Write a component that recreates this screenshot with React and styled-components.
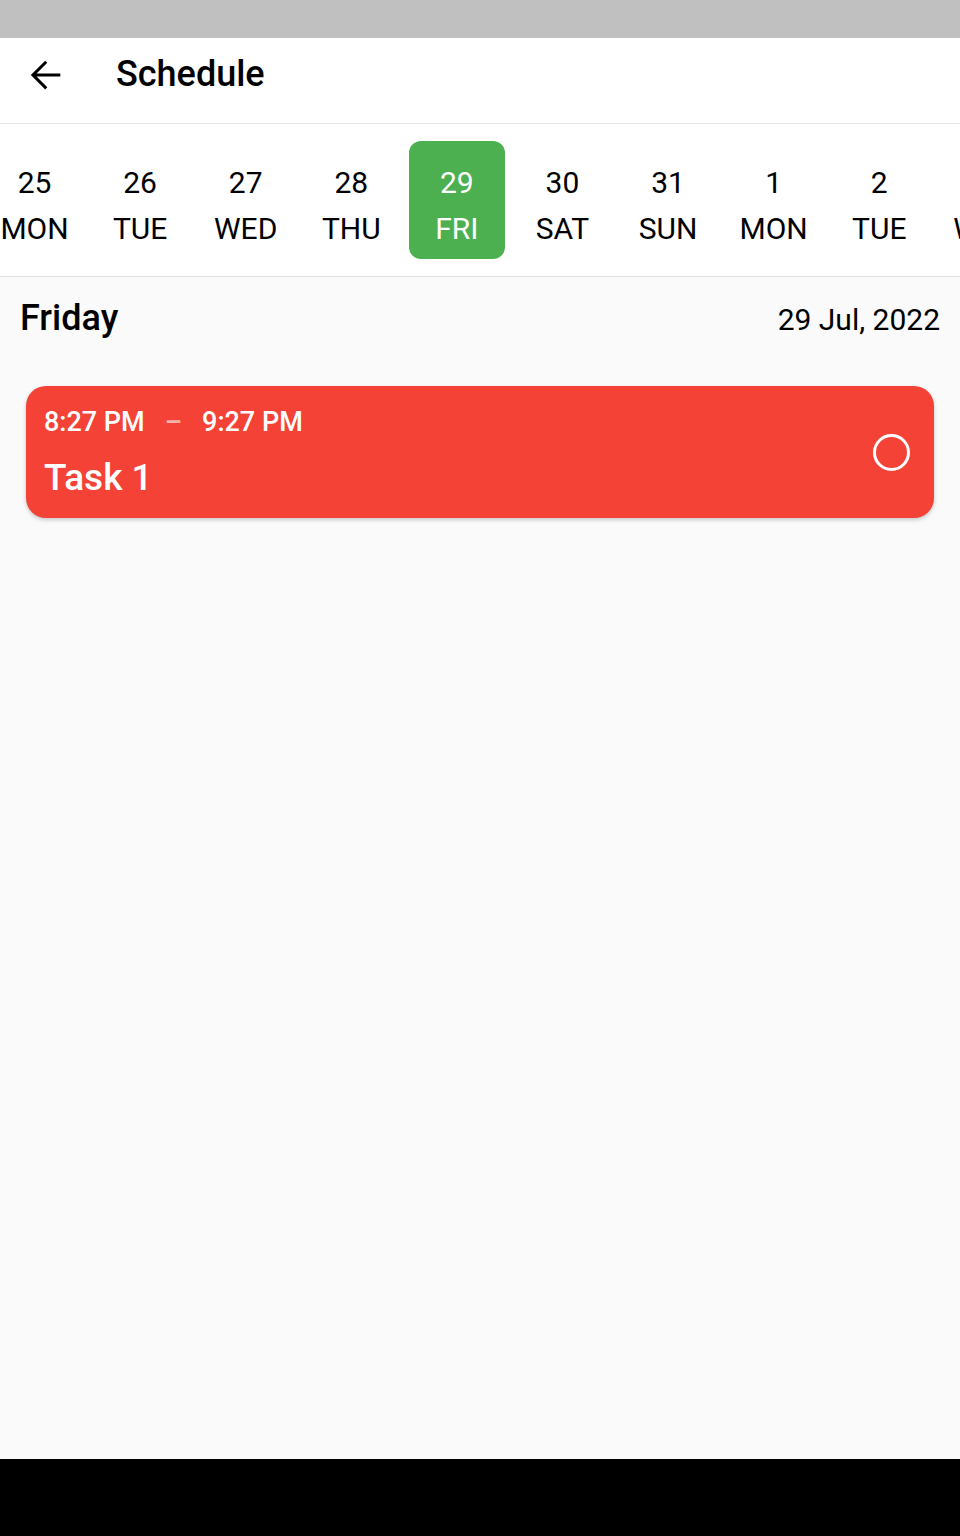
import React from "react";
import styled, { createGlobalStyle } from "styled-components";

const days = [
  { num: 25, name: "MON" },
  { num: 26, name: "TUE" },
  { num: 27, name: "WED" },
  { num: 28, name: "THU" },
  { num: 29, name: "FRI", active: true },
  { num: 30, name: "SAT" },
  { num: 31, name: "SUN" },
  { num: 1, name: "MON" },
  { num: 2, name: "TUE" },
  { num: 3, name: "WED" },
];

export default function App() {
  return (
    <>
      <GlobalStyle />
      <Screen>
        <StatusBar />
        <AppBar>
          <BackButton aria-label="Back">
            <svg width="46" height="46" viewBox="0 0 24 24">
              <path
                fill="#000"
                d="M20 11.2H7.6l5.6-5.6L12.1 4.5 4.6 12l7.5 7.5 1.1-1.1-5.6-5.6H20v-1.6z"
              />
            </svg>
          </BackButton>
          <Title>Schedule</Title>
        </AppBar>

        <DateStrip>
          <DateRow>
            {days.map((d, i) => (
              <DayItem key={i} $active={d.active}>
                <DayNum>{d.num}</DayNum>
                <DayName>{d.name}</DayName>
              </DayItem>
            ))}
          </DateRow>
        </DateStrip>

        <Content>
          <DayHeader>
            <DayTitle>Friday</DayTitle>
            <DayDate>29 Jul, 2022</DayDate>
          </DayHeader>

          <TaskCard>
            <TaskInfo>
              <TaskTime>
                8:27 PM<Dash>–</Dash>9:27 PM
              </TaskTime>
              <TaskTitle>Task 1</TaskTitle>
            </TaskInfo>
            <CheckCircle />
          </TaskCard>
        </Content>

        <NavBar />
      </Screen>
    </>
  );
}

const GlobalStyle = createGlobalStyle`
  html, body {
    margin: 0;
    padding: 0;
    background: #fafafa;
  }
  body {
    font-family: Roboto, "Noto Sans", Arial, sans-serif;
    color: #000;
  }
`;

const Screen = styled.div`
  width: 960px;
  height: 1536px;
  display: flex;
  flex-direction: column;
  overflow: hidden;
  background: #fafafa;
`;

const StatusBar = styled.div`
  height: 38px;
  background: #c0c0c0;
  flex-shrink: 0;
`;

const AppBar = styled.header`
  height: 86px;
  flex-shrink: 0;
  box-sizing: border-box;
  background: #fff;
  border-bottom: 1px solid #e6e6e6;
  display: flex;
  align-items: flex-start;
  padding: 13px 0 0 22px;
`;

const BackButton = styled.div`
  width: 46px;
  height: 46px;
  display: flex;
  margin-top: 1px;
  svg {
    display: block;
  }
`;

const Title = styled.h1`
  margin: 0 0 0 48px;
  font-size: 36px;
  font-weight: 500;
  line-height: 46px;
`;

const DateStrip = styled.nav`
  flex-shrink: 0;
  background: #fff;
  border-bottom: 1px solid #e0e0e0;
  padding: 17px 0;
  overflow: hidden;
`;

const DateRow = styled.div`
  display: flex;
  gap: 9.6px;
  margin-left: -13.5px;
`;

const DayItem = styled.div`
  flex: 0 0 96px;
  height: 118px;
  box-sizing: border-box;
  padding-top: 19px;
  border-radius: 12px;
  display: flex;
  flex-direction: column;
  align-items: center;
  background: ${(p) => (p.$active ? "#4caf50" : "transparent")};
  color: ${(p) => (p.$active ? "#fff" : "#000")};
`;

const DayNum = styled.span`
  font-size: 30px;
  line-height: 46px;
`;

const DayName = styled.span`
  font-size: 30px;
  line-height: 46px;
`;

const Content = styled.main`
  flex: 1;
  display: flex;
  flex-direction: column;
  padding: 21px 26px 0;
`;

const DayHeader = styled.div`
  display: flex;
  justify-content: space-between;
  align-items: baseline;
  margin: 0 -6px;
`;

const DayTitle = styled.h2`
  margin: 0;
  font-size: 36px;
  font-weight: 500;
  line-height: 40px;
`;

const DayDate = styled.span`
  font-size: 30px;
  line-height: 40px;
`;

const TaskCard = styled.div`
  margin-top: 46px;
  height: 132px;
  box-sizing: border-box;
  background: #f44336;
  border-radius: 20px;
  box-shadow: 0 2px 4px rgba(0, 0, 0, 0.2);
  display: flex;
  align-items: center;
  justify-content: space-between;
  padding: 0 24px 0 18px;
  color: #fff;
`;

const TaskInfo = styled.div`
  display: flex;
  flex-direction: column;
  gap: 19px;
  padding-top: 2px;
`;

const TaskTime = styled.div`
  font-size: 27px;
  font-weight: 500;
  line-height: 30px;
`;

const Dash = styled.span`
  margin: 0 20px;
  color: rgba(255, 255, 255, 0.6);
`;

const TaskTitle = styled.div`
  font-size: 37px;
  font-weight: 500;
  line-height: 44px;
`;

const CheckCircle = styled.div`
  width: 37px;
  height: 37px;
  box-sizing: border-box;
  border: 3px solid #fff;
  border-radius: 50%;
`;

const NavBar = styled.div`
  height: 77px;
  flex-shrink: 0;
  background: #000;
`;
